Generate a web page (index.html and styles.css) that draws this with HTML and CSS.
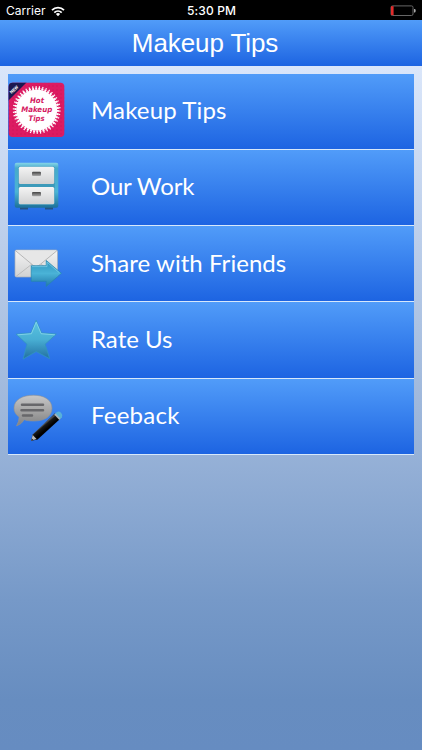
FILE: index.html
```html
<!DOCTYPE html>
<html lang="en">
<head>
<meta charset="utf-8">
<title>Makeup Tips</title>
<link rel="stylesheet" href="styles.css">
</head>
<body>
<div class="status">
  <div class="carrier"><span>Carrier</span>
    <svg width="14" height="11" viewBox="0 0 14 11"><g fill="none" stroke="#fff" stroke-width="1.8"><path d="M1 4.2a8.5 8.5 0 0 1 12 0"/><path d="M3.3 6.6a5.3 5.3 0 0 1 7.4 0"/></g><path d="M4.9 8.1a3 3 0 0 1 4.2 0L7 10.3z" fill="#fff"/></svg>
  </div>
  <div class="time">5:30 PM</div>
  <div class="battery"><svg width="26" height="12" viewBox="0 0 26 12"><rect x="1" y=".9" width="22" height="9.6" rx="1.5" fill="none" stroke="#666"/><path d="M1 1.2h2.6v9H1z" fill="#e32b2b"/><path d="M24 4h.8q.9 0 .9 1.7t-.9 1.7H24z" fill="#aaa"/></svg></div>
</div>
<header class="nav"><h1>Makeup Tips</h1></header>
<ul class="menu">
  <li class="row">
    <svg class="icon" viewBox="8 0 60 76">
      <defs>
        <clipPath id="tile"><rect x="8.7" y="9.7" width="55.6" height="54.4" rx="4"/></clipPath>
        <pattern id="dots" width="4" height="4" patternUnits="userSpaceOnUse"><circle cx="1" cy="1" r=".7" fill="#b80c4c" opacity=".55"/></pattern>
      </defs>
      <g clip-path="url(#tile)"><path fill="#dd1b62" d="M8 9h57v56H8z"/><path fill="url(#dots)" d="M8 9h57v56H8z"/><path d="M8 9h19L8 28z" fill="#1c1850"/></g>
      <circle cx="36.7" cy="37" r="20.5" fill="#fff"/>
      <circle cx="36.7" cy="37" r="21.2" fill="none" stroke="#fff" stroke-width="2" pathLength="84" stroke-dasharray="1.3 .7"/>
      <circle cx="36.7" cy="37" r="23" fill="none" stroke="#fff" stroke-width="1.8" pathLength="84" stroke-dasharray=".7 1.3" stroke-dashoffset="-.3"/>
      <text class="badge-new" x="15.1" y="17.8" transform="rotate(-43 15.1 17.8)">NEW</text>
      <g class="badge-text"><text x="37" y="29.5" textLength="14" lengthAdjust="spacingAndGlyphs">Hot</text><text x="36.7" y="38.8" textLength="31" lengthAdjust="spacingAndGlyphs">Makeup</text><text x="36.5" y="47.9" textLength="16" lengthAdjust="spacingAndGlyphs">Tips</text></g>
    </svg>
    <span class="label l1">Makeup Tips</span>
  </li>
  <li class="row">
    <svg class="icon" viewBox="8 0 60 76">
      <defs>
        <linearGradient id="cab" x2="0" y2="1"><stop stop-color="#88d6e8"/><stop offset=".12" stop-color="#46aacb"/><stop offset=".65" stop-color="#4bb4d5"/><stop offset="1" stop-color="#1d7199"/></linearGradient>
        <linearGradient id="silver" x2="0" y2="1"><stop stop-color="#f4f4f4"/><stop offset="1" stop-color="#d0d1d2"/></linearGradient>
        <linearGradient id="grip" x2="0" y2="1"><stop stop-color="#444"/><stop offset="1" stop-color="#aaa"/></linearGradient>
      </defs>
      <path d="M20 57h8v3.5h-8zM45 57h8v3.5h-8z" fill="#245282"/>
      <rect x="14.7" y="13.7" width="43.6" height="45" rx="2" fill="url(#cab)"/>
      <rect x="18.2" y="17.4" width="36.6" height="38.4" rx="2" fill="#3c9aba"/>
      <rect x="18.8" y="17.8" width="35.4" height="17.2" rx="1.5" fill="url(#silver)"/><rect x="18.8" y="38" width="35.4" height="17.2" rx="1.5" fill="url(#silver)"/>
      <rect x="32" y="22.8" width="9" height="4.3" rx="1" fill="url(#grip)"/><rect x="32" y="43" width="9" height="4.3" rx="1" fill="url(#grip)"/>
    </svg>
    <span class="label l2">Our Work</span>
  </li>
  <li class="row">
    <svg class="icon" viewBox="8 0 60 76">
      <defs><linearGradient id="arrow" x2="0" y2="1"><stop stop-color="#2f94bd"/><stop offset=".5" stop-color="#4ab3d7"/><stop offset="1" stop-color="#2278a8"/></linearGradient></defs>
      <rect x="15" y="24" width="42.5" height="27" rx="1.5" fill="url(#silver)" stroke="#a9afb8" stroke-width=".7"/>
      <path d="M16 50.5l16-12.5M56.5 50.5L41 38" stroke="#b4b4b4" stroke-width=".8"/>
      <path d="M15.7 24.8l18 15q2.4 1.8 4.8 0l18.3-15" fill="#e7e7e7" stroke="#aaa" stroke-width=".8"/>
      <path d="M31.2 39.7h15V34.4L61.4 47.3 46.2 60.5v-5.2h-15z" fill="url(#arrow)" stroke="#2585ae" stroke-width=".7"/>
      <path d="M32 40.6h15v-4.4l12.5 10.6" fill="none" stroke="#80d0e9" stroke-width=".7"/>
    </svg>
    <span class="label l3">Share with Friends</span>
  </li>
  <li class="row">
    <svg class="icon" viewBox="8 0 60 76">
      <defs><linearGradient id="star" x2="0" y2="1"><stop stop-color="#5ac5e1"/><stop offset=".5" stop-color="#48aed3"/><stop offset="1" stop-color="#226fa0"/></linearGradient></defs>
      <path d="M36.2 18.3l5.4 12.6 14.7 1.2L45.1 42.2l4.6 14.5-13.5-7.2-13 7.5L27 42.3 16.2 32.2l14.7-1.3z" fill="url(#star)" stroke="#3195bf" stroke-width=".8" stroke-linejoin="round"/>
      <path d="M17.5 32.8l13.9-1.1 4.8-11.6 4.9 11.6 13.8 1.1" fill="none" stroke="#86d4e9" stroke-width=".9"/>
    </svg>
    <span class="label l4">Rate Us</span>
  </li>
  <li class="row">
    <svg class="icon" viewBox="8 0 60 76">
      <defs>
        <linearGradient id="bubble" x2="0" y2="1"><stop stop-color="#c8c8c8"/><stop offset="1" stop-color="#818181"/></linearGradient>
        <linearGradient id="pencil" gradientUnits="userSpaceOnUse" x1="44" y1="43" x2="49" y2="49"><stop stop-color="#080808"/><stop offset=".3" stop-color="#555"/><stop offset=".5" stop-color="#181818"/><stop offset="1"/></linearGradient>
      </defs>
      <path d="M33.5 17.2C43.5 17.2 52 21.5 52 30.2S44 43 34 43c-4 0-7-.2-9.8-1.3q-2.6 4.6-7.7 6.2 2.6-4.3 2.6-8.8C15.7 36.5 14 34 14 30c0-8.5 9-12.8 19.5-12.8z" fill="url(#bubble)" stroke="#929292" stroke-width=".6"/>
      <path d="M22 26.8h21M21.5 32.3h21.5M23 37.6h9" stroke="#67676a" stroke-width="2.5" stroke-linecap="round"/>
      <path d="M31.2 62.8l1.4-6.3L55 35.3l5.3 5.4-22.7 20.8z" fill="url(#pencil)"/>
      <path d="M31.2 62.8l1.5-5.8 3.9 4z" fill="#bbb"/><path d="M31.2 62.8l.7-2.4 1.7 1.7z" fill="#222"/>
      <path d="M55 35.9l1.8-1.700q2-1.6 4.2.6t.9 4.5l-1.8 1.7z" fill="#58b1d9"/>
      <path d="M54.2 36.600l1.300-1.200 5.100 5.300-1.300 1.200z" fill="#a7b4bc"/>
    </svg>
    <span class="label l5">Feeback</span>
  </li>
</ul>
</body>
</html>
```
FILE: styles.css
```css
* { box-sizing: border-box; }
body {
  margin: 0;
  height: 750px;
  overflow: hidden;
  color: #fff;
  font-family: "Liberation Sans", sans-serif;
  background: linear-gradient(#e4eeff 0, #dae6fa 66px, #96b1d7 455px, #7699c8 600px, #678dc0 700px, #668cc1 750px);
}
.status {
  display: grid;
  grid-template-columns: 1fr auto 1fr;
  height: 20px;
  padding: 1px 6px 0 6px;
  background: #000;
  font: 12px/20px Inter, sans-serif;
}
.carrier { display: flex; align-items: center; gap: 5px; letter-spacing: .05px; }
.time { padding-left: 1px; font-weight: 500; letter-spacing: .15px; }
.battery { display: flex; justify-content: flex-end; align-items: center; }
.nav {
  height: 45.5px;
  padding-right: 12px;
  background: linear-gradient(#519cf9, #1d64e2);
  text-align: center;
}
.nav h1 { margin: 0; font-size: 26px; line-height: 47px; font-weight: 400; letter-spacing: -.1px; }
.menu { list-style: none; margin: 8px 8px 0; padding: 0; }
.row {
  display: flex;
  align-items: center;
  height: 76.3px;
  border-bottom: 1px solid #d7e8fb;
  background: linear-gradient(#519cf9, #1d64e2);
}
.icon { width: 60px; height: 76px; flex: none; }
.label { margin: -2px 0 0 23px; font: 24px/32px Lato, sans-serif; white-space: nowrap; }
.l1 { letter-spacing: .15px; }
.l2 { letter-spacing: -.15px; }
.l3 { letter-spacing: .05px; }
.l5 { letter-spacing: .25px; }
.badge-text { font: italic bold 7.5px "DejaVu Sans", sans-serif; fill: #d51a62; text-anchor: middle; }
.badge-new { font: bold 4.5px Roboto, sans-serif; fill: #fff; text-anchor: middle; }
```
